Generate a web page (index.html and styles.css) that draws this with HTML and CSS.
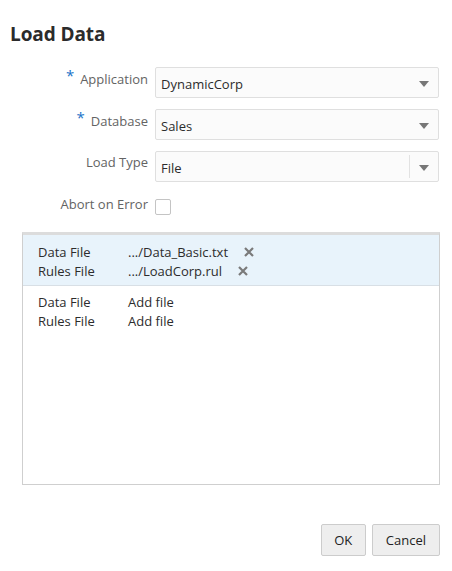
FILE: index.html
```html
<!DOCTYPE html>
<html>
<head>
<meta charset="utf-8">
<link rel="stylesheet" href="styles.css">
</head>
<body>
<div class="dialog">
  <h1 class="title">Load Data</h1>
  <div class="form">
    <label class="label"><span class="req">*</span>Application</label>
    <div class="select"><span class="value">DynamicCorp</span><span class="arrow"></span></div>

    <label class="label"><span class="req">*</span>Database</label>
    <div class="select"><span class="value">Sales</span><span class="arrow"></span></div>

    <label class="label">Load Type</label>
    <div class="select split"><span class="value">File</span><span class="divider"></span><span class="arrow"></span></div>

    <label class="label">Abort on Error</label>
    <div class="check-wrap"><span class="checkbox"></span></div>
  </div>

  <div class="panel">
    <div class="group selected">
      <div class="row"><span class="key">Data File</span><span class="val">.../Data_Basic.txt</span><svg class="x" width="10" height="10" viewBox="0 0 10 10"><path d="M1 1L9 9M9 1L1 9"/></svg></div>
      <div class="row"><span class="key">Rules File</span><span class="val">.../LoadCorp.rul</span><svg class="x" width="10" height="10" viewBox="0 0 10 10"><path d="M1 1L9 9M9 1L1 9"/></svg></div>
    </div>
    <div class="group">
      <div class="row"><span class="key">Data File</span><span class="val">Add file</span></div>
      <div class="row"><span class="key">Rules File</span><span class="val">Add file</span></div>
    </div>
  </div>

  <div class="buttons">
    <button class="btn ok">OK</button>
    <button class="btn">Cancel</button>
  </div>
</div>
</body>
</html>
```
FILE: styles.css
```css
html, body {
  margin: 0;
  padding: 0;
  background: #fff;
}
body {
  font-family: "Open Sans", "Noto Sans", sans-serif;
  font-size: 13px;
  color: #333;
}
.dialog {
  width: 452px;
  height: 571px;
  box-sizing: border-box;
  padding: 0 12px 0 10px;
  display: flex;
  flex-direction: column;
}
.title {
  margin: 22px 0 0 0;
  font-size: 19px;
  font-weight: 700;
  color: #2b2b2b;
  line-height: 24px;
  letter-spacing: -0.1px;
}
.form {
  margin-top: 21px;
  display: grid;
  grid-template-columns: 138px 284px;
  column-gap: 7px;
  row-gap: 11px;
  align-items: start;
}
.label {
  text-align: right;
  color: #636363;
  font-size: 13px;
  line-height: 18px;
  padding-top: 2px;
  white-space: nowrap;
}
.req {
  color: #1a73c8;
  font-size: 15px;
  margin-right: 6px;
  position: relative;
  top: -3px;
}
.select {
  height: 31px;
  box-sizing: border-box;
  border: 1px solid #dfdfdf;
  border-radius: 2px;
  background: #fbfbfb;
  display: flex;
  align-items: center;
  padding-left: 5px;
}
.value {
  flex: 1;
  color: #2c2c2c;
  font-size: 13px;
  padding-top: 3px;
}
.divider {
  width: 1px;
  height: 23px;
  background: #e2e2e2;
  margin-right: 9px;
}
.arrow {
  width: 0;
  height: 0;
  border-left: 5px solid transparent;
  border-right: 5px solid transparent;
  border-top: 6px solid #777;
  margin-right: 9px;
  margin-top: 3px;
}
.check-wrap {
  padding-top: 6px;
}
.checkbox {
  display: block;
  width: 14px;
  height: 14px;
  border: 1px solid #c4c4c4;
  border-radius: 2px;
  background: #fff;
}
.panel {
  margin: 17px 0 0 12px;
  height: 253px;
  box-sizing: border-box;
  border: 1px solid #cfcfcf;
  border-top: 3px solid #dcdcdc;
}
.group {
  padding: 6px 0 8px 15px;
}
.group.selected {
  background: #e8f3fb;
  border-bottom: 1px solid #d8dfe5;
  padding-top: 7px;
  padding-bottom: 5px;
}
.row {
  display: flex;
  align-items: center;
  height: 19px;
  color: #2c2c2c;
}
.key {
  width: 90px;
}
.x {
  margin-left: 16px;
  stroke: #7a7a7a;
  stroke-width: 2.2;
  fill: none;
}
.buttons {
  margin-top: auto;
  margin-bottom: 15px;
  display: flex;
  justify-content: flex-end;
  gap: 6px;
}
.btn {
  height: 32px;
  box-sizing: border-box;
  border: 1px solid #cccccc;
  border-radius: 2px;
  background: #eeeeee;
  color: #222;
  font-family: "Open Sans", "Noto Sans", sans-serif;
  font-size: 13px;
  padding: 0 13px;
}
.ok {
  width: 45px;
  padding: 0;
}
```
